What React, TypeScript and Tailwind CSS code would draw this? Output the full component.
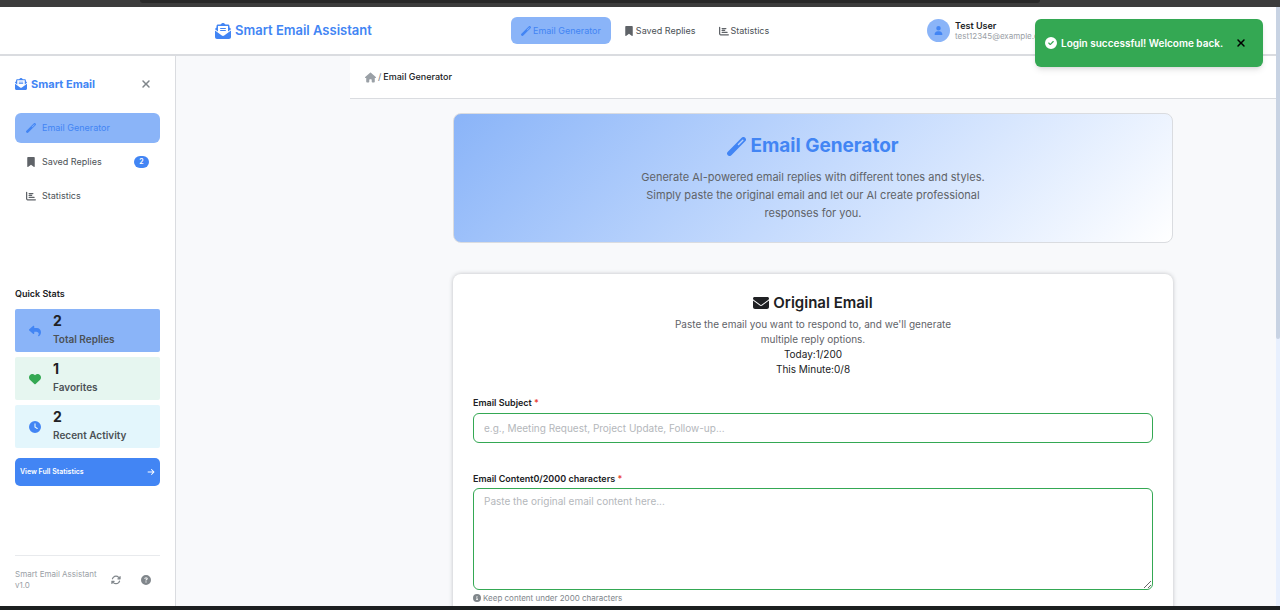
import React from "react";
import {
  FaArrowRight,
  FaArrowsRotate,
  FaBookmark,
  FaChartBar,
  FaCircleCheck,
  FaCircleInfo,
  FaCircleQuestion,
  FaClock,
  FaEnvelope,
  FaEnvelopeOpenText,
  FaHeart,
  FaHouse,
  FaReply,
  FaUser,
  FaXmark,
} from "react-icons/fa6";

function WandIcon({ className }: { className?: string }) {
  return (
    <svg viewBox="0 0 19 19" className={className} fill="currentColor" fillRule="evenodd" aria-hidden="true">
      <path d="M.83 14.63 14.63.83a2.5 2.5 0 0 1 3.54 3.54L4.37 18.17a2.5 2.5 0 0 1-3.54-3.54zM11 7a.7.7 0 0 0 1 1l4.3-4.3a.7.7 0 0 0-1-1z" />
    </svg>
  );
}

const links = [
  { label: "Email Generator", icon: WandIcon, active: true, count: 0 },
  { label: "Saved Replies", icon: FaBookmark, active: false, count: 2 },
  { label: "Statistics", icon: FaChartBar, active: false, count: 0 },
];

const stats = [
  { label: "Total Replies", value: 2, icon: FaReply, card: "bg-[#8ab4f8]", tint: "text-[#4285f4]" },
  { label: "Favorites", value: 1, icon: FaHeart, card: "bg-[#e6f6f0]", tint: "text-[#34a853]" },
  { label: "Recent Activity", value: 2, icon: FaClock, card: "bg-[#e3f6fc]", tint: "text-[#4285f4]" },
];

function TopNav() {
  return (
    <header className="h-[49px] shrink-0 border-b-2 border-[#dadce0] bg-white pr-1">
      <div className="mx-auto flex h-full max-w-[842px] items-center">
        <a href="#home" className="flex w-[296px] items-center gap-1 text-[13px] font-semibold text-[#4285f4]">
          <FaEnvelopeOpenText className="size-4" />
          Smart Email Assistant
        </a>
        <nav className="flex items-center gap-[3px]" aria-label="Primary">
          {links.map(({ label, icon: Icon, active }) => (
            <a
              key={label}
              href="#nav"
              className={
                active
                  ? "flex h-[27px] items-center gap-[2px] rounded-md bg-[#8ab4f8] px-2.5 text-[9px] text-[#4285f4]"
                  : "flex h-[27px] items-center gap-[2px] rounded-md px-2.5 text-[9px] text-[#4b5156]"
              }
            >
              <Icon className={active ? "size-2.5" : "size-2.5 text-[#5f6368]"} />
              {label}
            </a>
          ))}
        </nav>
        <div className="ml-auto flex w-[130px] items-center gap-[5px]">
          <span className="flex size-[23px] shrink-0 items-center justify-center rounded-full bg-[#8ab4f8] text-[#4285f4]">
            <FaUser className="size-[9px]" />
          </span>
          <div className="flex flex-col">
            <span className="text-[9px] leading-[10px] font-semibold text-[#202124]">Test User</span>
            <span className="text-[8px] leading-[10px] text-[#9aa0a6]">test12345@example.com</span>
          </div>
        </div>
      </div>
    </header>
  );
}

function Sidebar() {
  return (
    <aside className="flex w-44 shrink-0 flex-col border-r border-[#dadce0] bg-white px-[15px] pb-[15px]">
      <div className="flex h-14 items-center justify-between">
        <a href="#home" className="flex items-center gap-1 text-[11px] font-bold text-[#4285f4]">
          <FaEnvelopeOpenText className="size-3" />
          Smart Email
        </a>
        <button type="button" aria-label="Close sidebar" className="pr-2 text-[#80868b]">
          <FaXmark className="size-3" />
        </button>
      </div>
      <nav className="mt-px flex flex-col gap-1" aria-label="Sidebar">
        {links.map(({ label, icon: Icon, active, count }) => (
          <a
            key={label}
            href="#nav"
            className={
              active
                ? "flex h-[30px] items-center gap-1.5 rounded-md bg-[#8ab4f8] px-[11px] text-[9px] text-[#4285f4]"
                : "flex h-[30px] items-center gap-1.5 rounded-md px-[11px] text-[9px] text-[#4b5156]"
            }
          >
            <Icon className={active ? "size-2.5" : "size-2.5 text-[#5f6368]"} />
            {label}
            {count > 0 && (
              <span className="ml-auto flex h-3 w-[15px] items-center justify-center rounded-full bg-[#4285f4] text-[7px] font-semibold text-white">
                {count}
              </span>
            )}
          </a>
        ))}
      </nav>
      <section className="mt-[75px] flex flex-col">
        <h2 className="text-[9px] leading-4 font-semibold text-[#202124]">Quick Stats</h2>
        <ul className="mt-[7px] flex flex-col gap-[5px]">
          {stats.map(({ label, value, icon: Icon, card, tint }) => (
            <li key={label} className={`flex h-[43px] items-center rounded-xs pl-3.5 ${card}`}>
              <Icon className={`size-3 ${tint}`} />
              <div className="ml-3 flex flex-col pb-[2px]">
                <span className="text-sm leading-[18px] font-bold text-[#202124]">{value}</span>
                <span className="text-[10px] leading-[18px] font-semibold text-[#4b5156]">{label}</span>
              </div>
            </li>
          ))}
        </ul>
        <button
          type="button"
          className="mt-2.5 flex h-7 items-center justify-between rounded-[5px] bg-[#4285f4] px-[5px] text-[7px] font-semibold text-white"
        >
          View Full Statistics
          <FaArrowRight className="size-2" />
        </button>
      </section>
      <footer className="mt-auto flex items-center border-t border-[#e8eaed] pt-[13px]">
        <p className="w-24 text-[8px] leading-[11px] text-[#9aa0a6]">
          Smart Email Assistant
          <br />
          v1.0
        </p>
        <button type="button" aria-label="Refresh" className="text-[#80868b]">
          <FaArrowsRotate className="size-2.5" />
        </button>
        <button type="button" aria-label="Help" className="ml-5 text-[#80868b]">
          <FaCircleQuestion className="size-2.5" />
        </button>
      </footer>
    </aside>
  );
}

function Hero() {
  return (
    <section className="flex flex-col items-center rounded-lg border border-[#dadce0] bg-linear-135 from-[#8ab4f8] to-white px-5 pt-[18px] pb-5 text-center">
      <h1 className="flex items-center gap-1 text-[19px] leading-7 font-bold text-[#4285f4]">
        <WandIcon className="size-[19px]" />
        Email Generator
      </h1>
      <p className="mt-2 w-full max-w-[360px] text-[11px] leading-[18px] text-[#5f6368]">
        Generate AI-powered email replies with different tones and styles. Simply paste the original email and let our
        AI create professional responses for you.
      </p>
    </section>
  );
}

function EmailForm() {
  return (
    <form className="mt-[31px] flex flex-col rounded-lg bg-white px-5 pt-[17px] pb-8 shadow-[0_0_4px_rgba(60,64,67,0.3)]">
      <div className="flex flex-col items-center text-center">
        <h2 className="flex items-center gap-1 text-[15px] leading-6 font-semibold text-[#202124]">
          <FaEnvelope className="size-4" />
          Original Email
        </h2>
        <p className="mt-[2px] w-full max-w-[300px] text-[10px] leading-[15px] text-[#5f6368]">
          Paste the email you want to respond to, and we'll generate multiple reply options.
        </p>
        <p className="text-[10px] leading-[15px] text-[#202124]">Today:1/200</p>
        <p className="text-[10px] leading-[15px] text-[#202124]">This Minute:0/8</p>
      </div>
      <label htmlFor="subject" className="mt-[18px] text-[9px] leading-4 font-semibold text-[#202124]">
        Email Subject <span className="text-[#ea4335]">*</span>
      </label>
      <input
        id="subject"
        type="text"
        placeholder="e.g., Meeting Request, Project Update, Follow-up..."
        className="mt-[2px] h-[30px] rounded-md border border-[#34a853] bg-white px-2.5 text-[10px] text-[#202124] placeholder:text-[#b4b7bb]"
      />
      <label htmlFor="content" className="mt-7 text-[9px] leading-4 font-semibold text-[#202124]">
        Email Content0/2000 characters <span className="text-[#ea4335]">*</span>
      </label>
      <textarea
        id="content"
        placeholder="Paste the original email content here..."
        className="mt-px h-[102px] resize-y rounded-md border border-[#34a853] bg-white px-2.5 py-1 text-[10px] leading-4 text-[#202124] placeholder:text-[#b4b7bb]"
      />
      <p className="mt-[2px] flex items-center gap-[2px] text-[8px] leading-3 text-[#80868b]">
        <FaCircleInfo className="size-2" />
        Keep content under 2000 characters
      </p>
    </form>
  );
}

function Toast() {
  return (
    <div
      role="status"
      className="absolute top-[19px] right-[17px] flex h-12 w-[228px] items-center rounded-md bg-[#34a853] px-2.5 text-[10px] font-semibold whitespace-nowrap text-white shadow-md"
    >
      <FaCircleCheck className="mr-1 size-3 shrink-0" />
      Login successful! Welcome back.
      <button type="button" aria-label="Dismiss" className="ml-3 text-black">
        <FaXmark className="size-3" />
      </button>
    </div>
  );
}

export default function App() {
  return (
    <div className="relative flex h-screen flex-col overflow-hidden bg-[#f8f9fa] font-['Inter',sans-serif]">
      <div className="h-[7px] shrink-0 bg-[#3c3c3c] px-[140px]">
        <div className="mr-[100px] h-[3px] rounded-b-lg bg-[#282828]" />
      </div>
      <div className="flex min-h-0 flex-1">
        <div className="flex min-w-0 flex-1 flex-col">
          <TopNav />
          <div className="flex min-h-0 flex-1">
            <Sidebar />
            <main className="min-w-0 flex-1 overflow-hidden bg-[#f8f9fb] pl-[174px]">
              <nav
                aria-label="Breadcrumb"
                className="flex h-[43px] items-center gap-[2px] border-b border-[#dadce0] bg-white px-[15px] text-[9px] font-medium text-[#202124]"
              >
                <a href="#home" aria-label="Home" className="text-[#9aa0a6]">
                  <FaHouse className="size-[11px]" />
                </a>
                <span className="text-[#80868b]">/</span>
                <span>Email Generator</span>
              </nav>
              <div className="mx-auto max-w-[720px] pt-3.5">
                <Hero />
                <EmailForm />
              </div>
            </main>
          </div>
        </div>
        <div className="w-1 shrink-0 bg-[#e8f0fe]">
          <div className="h-[55.5%] rounded-b-xs bg-[#c8d3e3]" />
        </div>
      </div>
      <div className="h-1 shrink-0 bg-[#1c1f20]" />
      <Toast />
    </div>
  );
}
